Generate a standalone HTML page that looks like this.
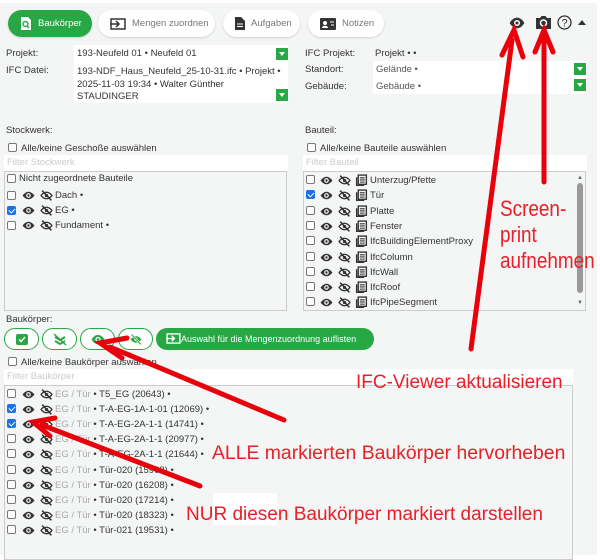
<!DOCTYPE html><html><head><meta charset="utf-8"><style>
*{margin:0;padding:0;box-sizing:border-box}
body{width:600px;height:555px;background:#fff;font-family:"Liberation Sans","DejaVu Sans",sans-serif;font-size:9.5px;color:#333;position:relative;overflow:hidden}
.a{position:absolute;white-space:nowrap}
#panel{position:absolute;left:0;top:3px;width:597px;height:552px;background:#f4f5f5}
.btn{position:absolute;top:10px;height:27px;border-radius:14px;background:#fff;box-shadow:0 1px 2px rgba(0,0,0,.15);color:#777;font-size:9.5px;display:flex;align-items:center;gap:6px;padding-left:12px}
.btn.g{background:#28a745;color:#fff}
.w{position:absolute;background:#fff}
.dd{position:absolute;width:12px;height:12px;background:#28a745}
.dd:after{content:"";position:absolute;left:3px;top:4px;border-left:3px solid transparent;border-right:3px solid transparent;border-top:4px solid #fff}
.box{position:absolute;border:1px solid #ccc;background:#f4f5f5}
.cb{position:absolute;width:9px;height:9px;border:1px solid #777;border-radius:2px;background:#fff}
.cb.on{background:#1a73e8;border-color:#1a73e8}
.cb.on:after{content:"";position:absolute;left:2px;top:0px;width:3px;height:5px;border:solid #fff;border-width:0 1.5px 1.5px 0;transform:rotate(45deg)}
.ic{position:absolute;width:13px;height:13px}
.gb{position:absolute;top:328px;width:35px;height:22px;border:1px solid #28a745;border-radius:11px;background:#fff}
.red{position:absolute;color:#e8202a;font-family:"Liberation Sans",sans-serif;white-space:nowrap}
.gray{color:#aaa}
</style></head><body>
<svg width="0" height="0" style="position:absolute">
<symbol id="eye" viewBox="0 0 24 24"><path d="M12 5C6 5 1 12 1 12s5 7 11 7 11-7 11-7-5-7-11-7z" fill="#333"/><circle cx="12" cy="12" r="4.3" fill="#fff"/><circle cx="12" cy="12" r="2.2" fill="#333"/></symbol>
<symbol id="neye" viewBox="0 0 24 24"><path d="M12 6C6 6 2 12 2 12s4 6 10 6 10-6 10-6-4-6-10-6z" fill="none" stroke="#333" stroke-width="2.5"/><circle cx="12" cy="12" r="3" fill="#333"/><path d="M4 3L21 21" stroke="#333" stroke-width="3"/></symbol>
<symbol id="lst" viewBox="0 0 24 24"><rect x="6" y="2" width="15" height="17" fill="none" stroke="#333" stroke-width="2.5"/><path d="M3 6v15h14" fill="none" stroke="#333" stroke-width="2.5"/><path d="M9 7h9M9 11h9M9 15h9" stroke="#333" stroke-width="2"/></symbol>
</svg>
<div id="panel"></div>
<div class="btn g" style="left:8px;width:84px"><svg width="12" height="13" viewBox="0 0 12 13"><path d="M1 0h7l3 3v10H1z" fill="#fff"/><circle cx="5.5" cy="7" r="2.5" fill="none" stroke="#28a745" stroke-width="1.5"/><path d="M7 9l2 2" stroke="#28a745" stroke-width="1.5"/></svg>Baukörper</div>
<div class="btn" style="left:98px;width:117px"><svg width="16" height="12" viewBox="0 0 16 12"><rect x="1" y="1" width="14" height="10" fill="none" stroke="#333" stroke-width="1.5"/><path d="M0 6h8M6 3l3 3-3 3" stroke="#333" stroke-width="1.5" fill="none"/></svg>Mengen zuordnen</div>
<div class="btn" style="left:223px;width:77px"><svg width="10" height="13" viewBox="0 0 10 13"><path d="M0 0h6l4 4v9H0z" fill="#333"/><path d="M2 7h6M2 9.5h6" stroke="#fff"/></svg>Aufgaben</div>
<div class="btn" style="left:308px;width:76px"><svg width="16" height="12" viewBox="0 0 16 12"><rect width="16" height="12" rx="1" fill="#333"/><circle cx="5" cy="5" r="2" fill="#fff"/><path d="M2 10c0-3 6-3 6 0z" fill="#fff"/><path d="M10 4h4M11 7h3" stroke="#fff"/></svg>Notizen</div>
<svg class="a" style="left:509px;top:17px" width="16" height="12" viewBox="0 0 24 18"><path d="M12 1C5 1 1 9 1 9s4 8 11 8 11-8 11-8-4-8-11-8z" fill="#333"/><circle cx="12" cy="9" r="4.5" fill="#fff"/><circle cx="12" cy="9" r="2.3" fill="#333"/></svg>
<svg class="a" style="left:536px;top:15px" width="15" height="14" viewBox="0 0 15 14"><path d="M0 3h4l1.5-2h4L11 3h4v11H0z" fill="#333"/><circle cx="7.5" cy="8" r="3" fill="none" stroke="#fff" stroke-width="1.5"/></svg>
<svg class="a" style="left:557px;top:15px" width="15" height="15" viewBox="0 0 15 15"><circle cx="7.5" cy="7.5" r="6.5" fill="none" stroke="#333" stroke-width="1.3"/><text x="7.5" y="11.3" font-size="11" text-anchor="middle" fill="#333" font-family="Liberation Sans">?</text></svg>
<div class="a" style="left:578px;top:20px;border-left:4px solid transparent;border-right:4px solid transparent;border-bottom:5px solid #333"></div>

<div class="a" style="left:6px;top:48px">Projekt:</div>
<div class="a" style="left:6px;top:65px">IFC Datei:</div>
<div class="w" style="left:74px;top:45px;width:214px;height:58px"></div>
<div class="a" style="left:77px;top:48px">193-Neufeld 01 • Neufeld 01</div>
<div class="a" style="left:77px;top:66px;line-height:12.5px">193-NDF_Haus_Neufeld_25-10-31.ifc • Projekt •<br>2025-11-03 19:34 • Walter Günther<br>STAUDINGER</div>
<div class="dd" style="left:276px;top:48px"></div><div class="dd" style="left:276px;top:89px"></div>

<div class="a" style="left:305px;top:48px">IFC Projekt:</div>
<div class="a" style="left:375px;top:48px">Projekt • •</div>
<div class="a" style="left:305px;top:64px">Standort:</div>
<div class="a" style="left:305px;top:81px">Gebäude:</div>
<div class="w" style="left:373px;top:61px;width:214px;height:33px"></div>
<div class="a" style="left:376px;top:64px;color:#555">Gelände •</div>
<div class="a" style="left:376px;top:81px;color:#555">Gebäude •</div>
<div class="dd" style="left:574px;top:63px"></div><div class="dd" style="left:574px;top:79px"></div>

<div class="a" style="left:6px;top:125px">Stockwerk:</div>
<div class="cb" style="left:8px;top:143px"></div><div class="a" style="left:21px;top:143px">Alle/keine Geschoße auswählen</div>
<div class="w" style="left:4px;top:155px;width:284px;height:16px"></div><div class="a gray" style="left:7px;top:157px;color:#ccc">Filter Stockwerk</div>
<div class="box" style="left:4px;top:171px;width:283px;height:140px"></div>
<div class="cb" style="left:7px;top:174px"></div><div class="a" style="left:19px;top:173px">Nicht zugeordnete Bauteile</div>
<div class="cb" style="left:7px;top:191px"></div><svg class="ic" style="left:22px;top:189px"><use href="#eye"/></svg><svg class="ic" style="left:40px;top:189px"><use href="#neye"/></svg><div class="a" style="left:55px;top:190px">Dach •</div>
<div class="cb on" style="left:7px;top:206px"></div><svg class="ic" style="left:22px;top:204px"><use href="#eye"/></svg><svg class="ic" style="left:40px;top:204px"><use href="#neye"/></svg><div class="a" style="left:55px;top:205px">EG •</div>
<div class="cb" style="left:7px;top:221px"></div><svg class="ic" style="left:22px;top:219px"><use href="#eye"/></svg><svg class="ic" style="left:40px;top:219px"><use href="#neye"/></svg><div class="a" style="left:55px;top:220px">Fundament •</div>

<div class="a" style="left:305px;top:125px">Bauteil:</div>
<div class="cb" style="left:307px;top:143px"></div><div class="a" style="left:320px;top:143px">Alle/keine Bauteile auswählen</div>
<div class="w" style="left:303px;top:155px;width:284px;height:16px"></div><div class="a" style="left:306px;top:157px;color:#ccc">Filter Bauteil</div>
<div class="box" style="left:303px;top:171px;width:283px;height:140px"></div>
<div class="a" style="left:577px;top:183px;width:6px;height:110px;background:#999;border-radius:3px"></div>
<div class="a" style="left:577px;top:175px;font-size:6px;color:#666">▲</div><div class="a" style="left:577px;top:300px;font-size:6px;color:#666">▼</div>
<div id="bt"></div>

<div class="a" style="left:6px;top:314px">Baukörper:</div>
<div class="gb" style="left:4px"><div class="a" style="left:11px;top:5px;width:12px;height:11px;background:#28a745;border-radius:2px"></div><svg class="a" style="left:13px;top:7px" width="8" height="7"><path d="M1 3.5l2 2 4-4.5" stroke="#fff" stroke-width="1.5" fill="none"/></svg></div>
<div class="gb" style="left:42px"><svg class="a" style="left:10px;top:4px" width="14" height="13" viewBox="0 0 14 13"><path d="M2 4l5 3 5-3M2 8l5 3 5-3" stroke="#28a745" stroke-width="2" fill="none"/><path d="M1 1l12 11" stroke="#28a745" stroke-width="1.5"/></svg></div>
<div class="gb" style="left:80px"><svg class="a" style="left:10px;top:5px" width="14" height="11" viewBox="0 0 24 18"><path d="M12 1C5 1 1 9 1 9s4 8 11 8 11-8 11-8-4-8-11-8z" fill="#28a745"/><circle cx="12" cy="9" r="4.5" fill="#fff"/><circle cx="12" cy="9" r="2.3" fill="#28a745"/></svg></div>
<div class="gb" style="left:118px"><svg class="a" style="left:10px;top:4px" width="14" height="13" viewBox="0 0 24 24"><path d="M12 6C6 6 2 12 2 12s4 6 10 6 10-6 10-6-4-6-10-6z" fill="#28a745"/><circle cx="12" cy="12" r="3" fill="#fff"/><path d="M4 3L21 21" stroke="#fff" stroke-width="4"/><path d="M4 3L21 21" stroke="#28a745" stroke-width="2"/></svg></div>
<div class="a" style="left:156px;top:328px;width:218px;height:22px;border-radius:11px;background:#28a745;color:#fff;font-size:9px;padding:5px 0 0 10px"><svg width="15" height="11" viewBox="0 0 16 12" style="vertical-align:-2px"><rect x="1" y="1" width="14" height="10" fill="none" stroke="#fff" stroke-width="1.5"/><path d="M0 6h8M6 3l3 3-3 3" stroke="#fff" stroke-width="1.5" fill="none"/></svg>Auswahl für die Mengenzuordnung auflisten</div>
<div class="cb" style="left:8px;top:357px"></div><div class="a" style="left:21px;top:357px">Alle/keine Baukörper auswählen</div>
<div class="w" style="left:4px;top:369px;width:569px;height:16px"></div><div class="a" style="left:7px;top:371px;color:#ccc">Filter Baukörper</div>
<div class="box" style="left:4px;top:385px;width:569px;height:175px"></div>
<div id="bk"></div>

<div class="w" style="left:213px;top:493px;width:64px;height:32px"></div>
<div class="w" style="left:355px;top:369px;width:218px;height:16px"></div>
<svg class="a" style="left:0;top:0" width="600" height="555">
<g stroke="#e8000a" stroke-width="5" stroke-linecap="round" fill="none">
<path d="M471 349L512 40"/><path d="M502 55L514 30L523 57"/>
<path d="M544 182L544 38"/><path d="M535 52L544 30L553 52"/>
<path d="M284 420L110 347"/><path d="M127 338L100 343L122 358"/>
<path d="M200 486L42 425"/><path d="M55 418L33 422L50 436"/>
</g></svg>
<div class="red" style="left:500px;top:196px;font-size:22px;line-height:26px;transform:scaleX(0.86);transform-origin:0 0">Screen-<br>print<br>aufnehmen</div>
<div class="red" style="left:356px;top:372px;font-size:19px">IFC-Viewer aktualisieren</div>
<div class="red" style="left:212px;top:443px;font-size:19px;transform:scaleX(1.02);transform-origin:0 0">ALLE markierten Baukörper hervorheben</div>
<div class="red" style="left:186px;top:504px;font-size:19px">NUR diesen Baukörper markiert darstellen</div>
<script>
var b=["Unterzug/Pfette","Tür","Platte","Fenster","IfcBuildingElementProxy","IfcColumn","IfcWall","IfcRoof","IfcPipeSegment"],h="";
b.forEach(function(t,i){var y=174+i*15.3;h+='<div class="cb'+(i==1?' on':'')+'" style="left:306px;top:'+(y+1)+'px"></div><svg class="ic" style="left:320px;top:'+y+'px"><use href="#eye"/></svg><svg class="ic" style="left:338px;top:'+y+'px"><use href="#neye"/></svg><svg class="ic" style="left:355px;top:'+y+'px"><use href="#lst"/></svg><div class="a" style="left:370px;top:'+(y+1)+'px">'+t+'</div>';});
document.getElementById("bt").innerHTML=h;
var k=["T5_EG (20643)","T-A-EG-1A-1-01 (12069)","T-A-EG-2A-1-1 (14741)","T-A-EG-2A-1-1 (20977)","T-A-EG-2A-1-1 (21644)","Tür-020 (15963)","Tür-020 (16208)","Tür-020 (17214)","Tür-020 (18323)","Tür-021 (19531)"];h="";
k.forEach(function(t,i){var y=388+i*15.1;h+='<div class="cb'+(i==1||i==2?' on':'')+'" style="left:7px;top:'+(y+1)+'px"></div><svg class="ic" style="left:22px;top:'+y+'px"><use href="#eye"/></svg><svg class="ic" style="left:40px;top:'+y+'px"><use href="#neye"/></svg><div class="a" style="left:55px;top:'+(y+1)+'px"><span class="gray">EG / Tür</span> • '+t+' •</div>';});
document.getElementById("bk").innerHTML=h;
</script>
</body></html>
